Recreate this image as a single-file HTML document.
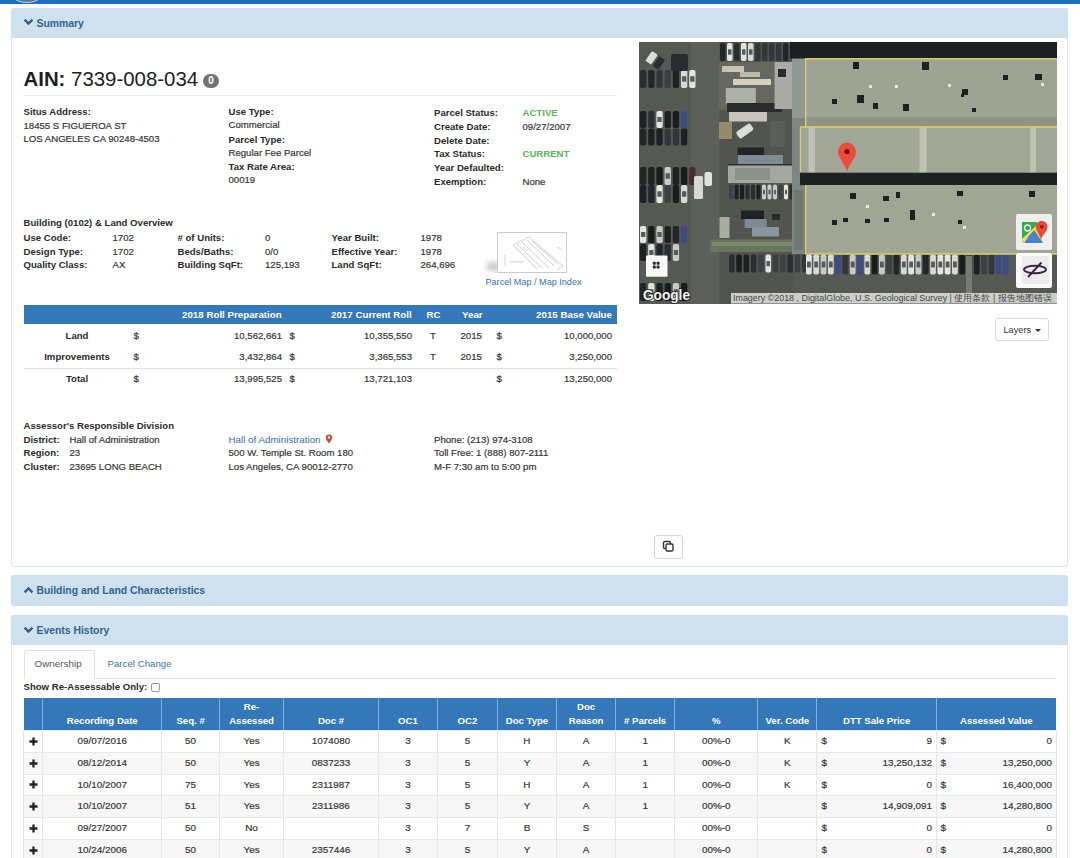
<!DOCTYPE html>
<html><head><meta charset="utf-8">
<style>
*{box-sizing:border-box}
html,body{margin:0;padding:0;background:#fff;width:1080px;height:858px;overflow:hidden}
body{position:relative;font-family:"Liberation Sans",sans-serif;color:#333}
.a{position:absolute}
.t{position:absolute;white-space:nowrap;line-height:12px;font-size:9.6px;color:#3a3a3a}
.b{font-weight:bold;color:#2b2b2b}
.g{color:#363636;-webkit-text-stroke:0.2px #363636}
.ph{position:absolute;left:11px;width:1057px;background:#d0e1ee;border-radius:3px 3px 0 0}
.ph span{position:absolute;left:25.5px;font-weight:bold;font-size:10.4px;color:#2f6491;line-height:14px;white-space:nowrap}
.chev{position:absolute;left:12px}
.th{position:absolute;background:#3478ba}
.wt{color:#fff;font-weight:bold}
.r{text-align:right}
.c{text-align:center}
</style></head><body>

<!-- top blue bar -->
<div class="a" style="left:0;top:0;width:1080px;height:4px;background:#1f6fbb"></div>
<div class="a" style="left:2px;top:-47.5px;width:50px;height:50px;border-radius:50%;border:1.5px solid #c9d3dc;background:#4f79a3"></div>

<!-- Summary panel -->
<div class="a" style="left:11px;top:8px;width:1057px;height:559px;border:1px solid #e3e6e9;border-radius:3px"></div>
<div class="ph" style="top:8px;height:30px"><svg class="chev" style="top:10px" width="11" height="8" viewBox="0 0 11 8"><polyline points="1.6,1.6 5.5,5.6 9.4,1.6" fill="none" stroke="#2d6190" stroke-width="2.4"/></svg><span style="top:9px">Summary</span></div>


<!-- AIN -->
<div class="a" style="left:23.5px;top:66.8px;font-size:20.4px;line-height:24px;color:#1e1e1e;white-space:nowrap"><b>AIN:</b> 7339-008-034</div>
<div class="a" style="left:203px;top:73.5px;width:16px;height:14px;border-radius:7px;background:#727272;color:#fff;font-size:10px;font-weight:bold;line-height:14px;text-align:center">0</div>
<div class="a" style="left:23px;top:95px;width:594px;height:1px;background:#ebebeb"></div>

<!-- col1 -->
<div class="t b" style="left:23.5px;top:106px">Situs Address:</div>
<div class="t g" style="left:23.5px;top:120px">18455 S FIGUEROA ST</div>
<div class="t g" style="left:23.5px;top:133px">LOS ANGELES CA 90248-4503</div>
<!-- col2 -->
<div class="t b" style="left:228.5px;top:106px">Use Type:</div>
<div class="t g" style="left:228.5px;top:119px">Commercial</div>
<div class="t b" style="left:228.5px;top:134px">Parcel Type:</div>
<div class="t g" style="left:228.5px;top:147px">Regular Fee Parcel</div>
<div class="t b" style="left:228.5px;top:161px">Tax Rate Area:</div>
<div class="t g" style="left:228.5px;top:174px">00019</div>
<!-- col3 -->
<div class="t b" style="left:434px;top:106.5px">Parcel Status:</div>
<div class="t b" style="left:434px;top:121px">Create Date:</div>
<div class="t b" style="left:434px;top:134.5px">Delete Date:</div>
<div class="t b" style="left:434px;top:148px">Tax Status:</div>
<div class="t b" style="left:434px;top:162px">Year Defaulted:</div>
<div class="t b" style="left:434px;top:175.5px">Exemption:</div>
<div class="t" style="left:522.5px;top:106.5px;color:#5cb85c;font-weight:bold">ACTIVE</div>
<div class="t g" style="left:522.5px;top:121px">09/27/2007</div>
<div class="t" style="left:522.5px;top:148px;color:#5cb85c;font-weight:bold">CURRENT</div>
<div class="t g" style="left:522.5px;top:175.5px">None</div>

<!-- building overview -->
<div class="t b" style="left:23.5px;top:217px">Building (0102) &amp; Land Overview</div>
<div class="t b" style="left:23.5px;top:231.5px">Use Code:</div>
<div class="t b" style="left:23.5px;top:245.5px">Design Type:</div>
<div class="t b" style="left:23.5px;top:258.5px">Quality Class:</div>
<div class="t g" style="left:112.5px;top:231.5px">1702</div>
<div class="t g" style="left:112.5px;top:245.5px">1702</div>
<div class="t g" style="left:112.5px;top:258.5px">AX</div>
<div class="t b" style="left:177.5px;top:231.5px"># of Units:</div>
<div class="t b" style="left:177.5px;top:245.5px">Beds/Baths:</div>
<div class="t b" style="left:177.5px;top:258.5px">Building SqFt:</div>
<div class="t g" style="left:265px;top:231.5px">0</div>
<div class="t g" style="left:265px;top:245.5px">0/0</div>
<div class="t g" style="left:265px;top:258.5px">125,193</div>
<div class="t b" style="left:331.5px;top:231.5px">Year Built:</div>
<div class="t b" style="left:331.5px;top:245.5px">Effective Year:</div>
<div class="t b" style="left:331.5px;top:258.5px">Land SqFt:</div>
<div class="t g" style="left:420.5px;top:231.5px">1978</div>
<div class="t g" style="left:420.5px;top:245.5px">1978</div>
<div class="t g" style="left:420.5px;top:258.5px">264,696</div>


<!-- parcel map thumb -->
<div class="a" style="left:486px;top:262px;width:16px;height:9px;background:#cfcfcf;border-radius:5px;filter:blur(2.5px)"></div>
<div class="a" style="left:497px;top:231.5px;width:70px;height:41px;border:1.5px solid #cbcbcb;background:#fff"></div>
<svg class="a" style="left:498.5px;top:233px" width="67" height="38" viewBox="0 0 67 38">
<g stroke="#bdbdbd" stroke-width="0.7" fill="none">
<polyline points="14,12 30,4 64,33 58,37"/>
<line x1="14" y1="12" x2="38" y2="36"/>
<line x1="18" y1="11" x2="43" y2="35"/>
<line x1="23" y1="9" x2="50" y2="35"/>
<line x1="28" y1="7" x2="55" y2="33"/>
<line x1="33" y1="8" x2="59" y2="31"/>
<line x1="24" y1="14" x2="28" y2="18"/>
<line x1="6" y1="22" x2="6" y2="33"/>
<line x1="11" y1="29" x2="24" y2="29"/>
<line x1="58" y1="14" x2="62" y2="16"/>
</g></svg>
<div class="t" style="left:485.5px;top:276px;color:#3a70a8;font-size:9.1px">Parcel Map / Map Index</div>

<!-- values table -->
<div class="th" style="left:23.5px;top:304.5px;width:593px;height:19px"></div>
<div class="t wt" style="left:182px;top:308.5px;font-size:9.75px">2018 Roll Preparation</div>
<div class="t wt" style="left:331px;top:308.5px;font-size:9.75px">2017 Current Roll</div>
<div class="t wt" style="left:426.5px;top:308.5px;font-size:9.75px">RC</div>
<div class="t wt" style="left:462px;top:308.5px;font-size:9.75px">Year</div>
<div class="t wt r" style="left:450px;width:162px;top:308.5px;font-size:9.75px">2015 Base Value</div>

<div class="t b c" style="left:37px;width:80px;top:329.5px">Land</div>
<div class="t b c" style="left:37px;width:80px;top:350.5px">Improvements</div>
<div class="t b c" style="left:37px;width:80px;top:373px">Total</div>
<div class="a" style="left:23.5px;top:367.5px;width:593px;height:1px;background:#e2e2e2"></div>

<div class="t g" style="left:133.5px;top:329.5px">$</div>
<div class="t g" style="left:133.5px;top:350.5px">$</div>
<div class="t g" style="left:133.5px;top:373px">$</div>
<div class="t g r" style="left:182px;width:100px;top:329.5px">10,562,661</div>
<div class="t g r" style="left:182px;width:100px;top:350.5px">3,432,864</div>
<div class="t g r" style="left:182px;width:100px;top:373px">13,995,525</div>
<div class="t g" style="left:289.5px;top:329.5px">$</div>
<div class="t g" style="left:289.5px;top:350.5px">$</div>
<div class="t g" style="left:289.5px;top:373px">$</div>
<div class="t g r" style="left:312px;width:100px;top:329.5px">10,355,550</div>
<div class="t g r" style="left:312px;width:100px;top:350.5px">3,365,553</div>
<div class="t g r" style="left:312px;width:100px;top:373px">13,721,103</div>
<div class="t g c" style="left:423px;width:20px;top:329.5px">T</div>
<div class="t g c" style="left:423px;width:20px;top:350.5px">T</div>
<div class="t g" style="left:460.5px;top:329.5px">2015</div>
<div class="t g" style="left:460.5px;top:350.5px">2015</div>
<div class="t g" style="left:496.5px;top:329.5px">$</div>
<div class="t g" style="left:496.5px;top:350.5px">$</div>
<div class="t g" style="left:496.5px;top:373px">$</div>
<div class="t g r" style="left:512px;width:100px;top:329.5px">10,000,000</div>
<div class="t g r" style="left:512px;width:100px;top:350.5px">3,250,000</div>
<div class="t g r" style="left:512px;width:100px;top:373px">13,250,000</div>

<!-- assessor division -->
<div class="t b" style="left:23.5px;top:420px">Assessor's Responsible Division</div>
<div class="t b" style="left:23.5px;top:433.5px">District:</div>
<div class="t b" style="left:23.5px;top:447px">Region:</div>
<div class="t b" style="left:23.5px;top:461px">Cluster:</div>
<div class="t g" style="left:69.5px;top:433.5px">Hall of Administration</div>
<div class="t g" style="left:69.5px;top:447px">23</div>
<div class="t g" style="left:69.5px;top:461px">23695 LONG BEACH</div>
<div class="t" style="left:228.5px;top:433.5px;color:#3a6fa6;font-size:9.8px">Hall of Administration</div>
<svg class="a" style="left:325px;top:434px" width="8" height="10" viewBox="0 0 8 10"><path d="M4 0.5C2.1 0.5 0.8 1.8 0.8 3.5C0.8 5.6 4 9.5 4 9.5C4 9.5 7.2 5.6 7.2 3.5C7.2 1.8 5.9 0.5 4 0.5Z" fill="#c9452e"/><circle cx="4" cy="3.5" r="1.2" fill="#fff"/></svg>
<div class="t g" style="left:228.5px;top:447px">500 W. Temple St. Room 180</div>
<div class="t g" style="left:228.5px;top:461px">Los Angeles, CA 90012-2770</div>
<div class="t g" style="left:434px;top:433.5px">Phone: (213) 974-3108</div>
<div class="t g" style="left:434px;top:447px">Toll Free: 1 (888) 807-2111</div>
<div class="t g" style="left:434px;top:461px">M-F 7:30 am to 5:00 pm</div>

<!-- copy button -->
<div class="a" style="left:654px;top:534.5px;width:29px;height:24px;border:1px solid #d6d6d6;border-radius:3px;background:#fff"></div>
<svg class="a" style="left:662px;top:540px" width="13" height="13" viewBox="0 0 13 13"><rect x="1.5" y="1.5" width="7" height="7" rx="1.3" fill="none" stroke="#333" stroke-width="1.4"/><rect x="4" y="4" width="7" height="7" rx="1.3" fill="#fff" stroke="#333" stroke-width="1.4"/></svg>

<!-- layers button -->
<div class="a" style="left:995px;top:318px;width:54px;height:23px;border:1px solid #d9d9d9;border-radius:3px;background:#fff"></div>
<div class="t" style="left:1003.5px;top:323.5px;color:#333;font-size:9.2px">Layers</div>
<div class="a" style="left:1035px;top:328.5px;width:0;height:0;border-left:3px solid transparent;border-right:3px solid transparent;border-top:3px solid #333"></div>

<!-- Building panel heading -->
<div class="ph" style="top:575px;height:31px;border-radius:3px"><svg class="chev" style="top:11px" width="11" height="8" viewBox="0 0 11 8"><polyline points="1.6,6.4 5.5,2.4 9.4,6.4" fill="none" stroke="#2d6190" stroke-width="2.4"/></svg><span style="top:9px">Building and Land Characteristics</span></div>

<!-- Events panel -->
<div class="a" style="left:11px;top:615px;width:1057px;height:260px;border:1px solid #e3e6e9;border-radius:3px"></div>
<div class="ph" style="top:615px;height:30px"><svg class="chev" style="top:11px" width="11" height="8" viewBox="0 0 11 8"><polyline points="1.6,1.6 5.5,5.6 9.4,1.6" fill="none" stroke="#2d6190" stroke-width="2.4"/></svg><span style="top:9px">Events History</span></div>

<!-- tabs -->
<div class="a" style="left:94px;top:677.5px;width:962px;height:1px;background:#e0e0e0"></div>
<div class="a" style="left:23.5px;top:649.5px;width:71px;height:29px;border:1px solid #e0e0e0;border-bottom:none;border-radius:3px 3px 0 0;background:#fff"></div>
<div class="t" style="left:34.5px;top:658px;color:#555;font-size:9.9px">Ownership</div>
<div class="t" style="left:107.5px;top:658px;color:#3b75ad;font-size:9.7px">Parcel Change</div>
<div class="t b" style="left:23.5px;top:680.5px">Show Re-Assessable Only:</div>
<div class="a" style="left:151px;top:683px;width:8.5px;height:8.5px;border:1px solid #999;border-radius:2px;background:#fff"></div>
<div class="th" style="left:23.8px;top:697.5px;width:1032.6000000000001px;height:32.5px"></div>
<div class="a" style="left:42.4px;top:697.5px;width:1px;height:32.5px;background:#7db2e5"></div>
<div class="a" style="left:161.1px;top:697.5px;width:1px;height:32.5px;background:#7db2e5"></div>
<div class="a" style="left:219.1px;top:697.5px;width:1px;height:32.5px;background:#7db2e5"></div>
<div class="a" style="left:283.0px;top:697.5px;width:1px;height:32.5px;background:#7db2e5"></div>
<div class="a" style="left:377.9px;top:697.5px;width:1px;height:32.5px;background:#7db2e5"></div>
<div class="a" style="left:437.0px;top:697.5px;width:1px;height:32.5px;background:#7db2e5"></div>
<div class="a" style="left:496.9px;top:697.5px;width:1px;height:32.5px;background:#7db2e5"></div>
<div class="a" style="left:556.0px;top:697.5px;width:1px;height:32.5px;background:#7db2e5"></div>
<div class="a" style="left:615.1px;top:697.5px;width:1px;height:32.5px;background:#7db2e5"></div>
<div class="a" style="left:674.2px;top:697.5px;width:1px;height:32.5px;background:#7db2e5"></div>
<div class="a" style="left:757.3px;top:697.5px;width:1px;height:32.5px;background:#7db2e5"></div>
<div class="a" style="left:816.4px;top:697.5px;width:1px;height:32.5px;background:#7db2e5"></div>
<div class="a" style="left:935.9px;top:697.5px;width:1px;height:32.5px;background:#7db2e5"></div>
<div class="a" style="left:23.8px;top:730px;width:1032.6000000000001px;height:21.799999999999955px;background:#fff;border-top:1px solid #e9e9e9"></div>
<div class="a" style="left:23.8px;top:751.8px;width:1032.6000000000001px;height:21.800000000000068px;background:#f7f7f7;border-top:1px solid #e9e9e9"></div>
<div class="a" style="left:23.8px;top:773.6px;width:1032.6000000000001px;height:21.799999999999955px;background:#fff;border-top:1px solid #e9e9e9"></div>
<div class="a" style="left:23.8px;top:795.4px;width:1032.6000000000001px;height:21.800000000000068px;background:#f7f7f7;border-top:1px solid #e9e9e9"></div>
<div class="a" style="left:23.8px;top:817.2px;width:1032.6000000000001px;height:21.799999999999955px;background:#fff;border-top:1px solid #e9e9e9"></div>
<div class="a" style="left:23.8px;top:839px;width:1032.6000000000001px;height:21.799999999999955px;background:#f7f7f7;border-top:1px solid #e9e9e9"></div>
<div class="a" style="left:23.3px;top:730px;width:1px;height:130px;background:#e6e6e6"></div>
<div class="a" style="left:42.4px;top:730px;width:1px;height:130px;background:#e6e6e6"></div>
<div class="a" style="left:161.1px;top:730px;width:1px;height:130px;background:#e6e6e6"></div>
<div class="a" style="left:219.1px;top:730px;width:1px;height:130px;background:#e6e6e6"></div>
<div class="a" style="left:283.0px;top:730px;width:1px;height:130px;background:#e6e6e6"></div>
<div class="a" style="left:377.9px;top:730px;width:1px;height:130px;background:#e6e6e6"></div>
<div class="a" style="left:437.0px;top:730px;width:1px;height:130px;background:#e6e6e6"></div>
<div class="a" style="left:496.9px;top:730px;width:1px;height:130px;background:#e6e6e6"></div>
<div class="a" style="left:556.0px;top:730px;width:1px;height:130px;background:#e6e6e6"></div>
<div class="a" style="left:615.1px;top:730px;width:1px;height:130px;background:#e6e6e6"></div>
<div class="a" style="left:674.2px;top:730px;width:1px;height:130px;background:#e6e6e6"></div>
<div class="a" style="left:757.3px;top:730px;width:1px;height:130px;background:#e6e6e6"></div>
<div class="a" style="left:816.4px;top:730px;width:1px;height:130px;background:#e6e6e6"></div>
<div class="a" style="left:935.9px;top:730px;width:1px;height:130px;background:#e6e6e6"></div>
<div class="a" style="left:1055.9px;top:730px;width:1px;height:130px;background:#e6e6e6"></div>
<div class="t wt c" style="left:42.9px;width:118.69999999999999px;top:714.5px">Recording Date</div>
<div class="t wt c" style="left:161.6px;width:58.0px;top:714.5px">Seq. #</div>
<div class="t wt c" style="left:219.6px;width:63.900000000000006px;top:701px">Re-</div>
<div class="t wt c" style="left:219.6px;width:63.900000000000006px;top:714.5px">Assessed</div>
<div class="t wt c" style="left:283.5px;width:94.89999999999998px;top:714.5px">Doc #</div>
<div class="t wt c" style="left:378.4px;width:59.10000000000002px;top:714.5px">OC1</div>
<div class="t wt c" style="left:437.5px;width:59.89999999999998px;top:714.5px">OC2</div>
<div class="t wt c" style="left:497.4px;width:59.10000000000002px;top:714.5px">Doc Type</div>
<div class="t wt c" style="left:556.5px;width:59.10000000000002px;top:701px">Doc</div>
<div class="t wt c" style="left:556.5px;width:59.10000000000002px;top:714.5px">Reason</div>
<div class="t wt c" style="left:615.6px;width:59.10000000000002px;top:714.5px"># Parcels</div>
<div class="t wt c" style="left:674.7px;width:83.09999999999991px;top:714.5px">%</div>
<div class="t wt c" style="left:757.8px;width:59.10000000000002px;top:714.5px">Ver. Code</div>
<div class="t wt c" style="left:816.9px;width:119.5px;top:714.5px">DTT Sale Price</div>
<div class="t wt c" style="left:936.4px;width:120.00000000000011px;top:714.5px">Assessed Value</div>
<svg class="a" style="left:28.5px;top:736.5px" width="9" height="9" viewBox="0 0 9 9"><path d="M4.5 0.5V8.5M0.5 4.5H8.5" stroke="#222" stroke-width="2.3"/></svg>
<div class="t g c" style="left:42.9px;width:118.69999999999999px;top:735px;font-size:9.9px">09/07/2016</div>
<div class="t g c" style="left:161.6px;width:58.0px;top:735px;font-size:9.9px">50</div>
<div class="t g c" style="left:219.6px;width:63.900000000000006px;top:735px;font-size:9.9px">Yes</div>
<div class="t g c" style="left:283.5px;width:94.89999999999998px;top:735px;font-size:9.9px">1074080</div>
<div class="t g c" style="left:378.4px;width:59.10000000000002px;top:735px;font-size:9.9px">3</div>
<div class="t g c" style="left:437.5px;width:59.89999999999998px;top:735px;font-size:9.9px">5</div>
<div class="t g c" style="left:497.4px;width:59.10000000000002px;top:735px;font-size:9.9px">H</div>
<div class="t g c" style="left:556.5px;width:59.10000000000002px;top:735px;font-size:9.9px">A</div>
<div class="t g c" style="left:615.6px;width:59.10000000000002px;top:735px;font-size:9.9px">1</div>
<div class="t g c" style="left:674.7px;width:83.09999999999991px;top:735px;font-size:9.9px">00%-0</div>
<div class="t g c" style="left:757.8px;width:59.10000000000002px;top:735px;font-size:9.9px">K</div>
<div class="t g" style="left:821.5px;top:735px;font-size:9.9px">$</div>
<div class="t g r" style="left:832px;width:100px;top:735px;font-size:9.9px">9</div>
<div class="t g" style="left:940.5px;top:735px;font-size:9.9px">$</div>
<div class="t g r" style="left:952px;width:100px;top:735px;font-size:9.9px">0</div>
<svg class="a" style="left:28.5px;top:758.5px" width="9" height="9" viewBox="0 0 9 9"><path d="M4.5 0.5V8.5M0.5 4.5H8.5" stroke="#222" stroke-width="2.3"/></svg>
<div class="t g c" style="left:42.9px;width:118.69999999999999px;top:757px;font-size:9.9px">08/12/2014</div>
<div class="t g c" style="left:161.6px;width:58.0px;top:757px;font-size:9.9px">50</div>
<div class="t g c" style="left:219.6px;width:63.900000000000006px;top:757px;font-size:9.9px">Yes</div>
<div class="t g c" style="left:283.5px;width:94.89999999999998px;top:757px;font-size:9.9px">0837233</div>
<div class="t g c" style="left:378.4px;width:59.10000000000002px;top:757px;font-size:9.9px">3</div>
<div class="t g c" style="left:437.5px;width:59.89999999999998px;top:757px;font-size:9.9px">5</div>
<div class="t g c" style="left:497.4px;width:59.10000000000002px;top:757px;font-size:9.9px">Y</div>
<div class="t g c" style="left:556.5px;width:59.10000000000002px;top:757px;font-size:9.9px">A</div>
<div class="t g c" style="left:615.6px;width:59.10000000000002px;top:757px;font-size:9.9px">1</div>
<div class="t g c" style="left:674.7px;width:83.09999999999991px;top:757px;font-size:9.9px">00%-0</div>
<div class="t g c" style="left:757.8px;width:59.10000000000002px;top:757px;font-size:9.9px">K</div>
<div class="t g" style="left:821.5px;top:757px;font-size:9.9px">$</div>
<div class="t g r" style="left:832px;width:100px;top:757px;font-size:9.9px">13,250,132</div>
<div class="t g" style="left:940.5px;top:757px;font-size:9.9px">$</div>
<div class="t g r" style="left:952px;width:100px;top:757px;font-size:9.9px">13,250,000</div>
<svg class="a" style="left:28.5px;top:780.2px" width="9" height="9" viewBox="0 0 9 9"><path d="M4.5 0.5V8.5M0.5 4.5H8.5" stroke="#222" stroke-width="2.3"/></svg>
<div class="t g c" style="left:42.9px;width:118.69999999999999px;top:778.7px;font-size:9.9px">10/10/2007</div>
<div class="t g c" style="left:161.6px;width:58.0px;top:778.7px;font-size:9.9px">75</div>
<div class="t g c" style="left:219.6px;width:63.900000000000006px;top:778.7px;font-size:9.9px">Yes</div>
<div class="t g c" style="left:283.5px;width:94.89999999999998px;top:778.7px;font-size:9.9px">2311987</div>
<div class="t g c" style="left:378.4px;width:59.10000000000002px;top:778.7px;font-size:9.9px">3</div>
<div class="t g c" style="left:437.5px;width:59.89999999999998px;top:778.7px;font-size:9.9px">5</div>
<div class="t g c" style="left:497.4px;width:59.10000000000002px;top:778.7px;font-size:9.9px">H</div>
<div class="t g c" style="left:556.5px;width:59.10000000000002px;top:778.7px;font-size:9.9px">A</div>
<div class="t g c" style="left:615.6px;width:59.10000000000002px;top:778.7px;font-size:9.9px">1</div>
<div class="t g c" style="left:674.7px;width:83.09999999999991px;top:778.7px;font-size:9.9px">00%-0</div>
<div class="t g c" style="left:757.8px;width:59.10000000000002px;top:778.7px;font-size:9.9px">K</div>
<div class="t g" style="left:821.5px;top:778.7px;font-size:9.9px">$</div>
<div class="t g r" style="left:832px;width:100px;top:778.7px;font-size:9.9px">0</div>
<div class="t g" style="left:940.5px;top:778.7px;font-size:9.9px">$</div>
<div class="t g r" style="left:952px;width:100px;top:778.7px;font-size:9.9px">16,400,000</div>
<svg class="a" style="left:28.5px;top:801.8px" width="9" height="9" viewBox="0 0 9 9"><path d="M4.5 0.5V8.5M0.5 4.5H8.5" stroke="#222" stroke-width="2.3"/></svg>
<div class="t g c" style="left:42.9px;width:118.69999999999999px;top:800.3px;font-size:9.9px">10/10/2007</div>
<div class="t g c" style="left:161.6px;width:58.0px;top:800.3px;font-size:9.9px">51</div>
<div class="t g c" style="left:219.6px;width:63.900000000000006px;top:800.3px;font-size:9.9px">Yes</div>
<div class="t g c" style="left:283.5px;width:94.89999999999998px;top:800.3px;font-size:9.9px">2311986</div>
<div class="t g c" style="left:378.4px;width:59.10000000000002px;top:800.3px;font-size:9.9px">3</div>
<div class="t g c" style="left:437.5px;width:59.89999999999998px;top:800.3px;font-size:9.9px">5</div>
<div class="t g c" style="left:497.4px;width:59.10000000000002px;top:800.3px;font-size:9.9px">Y</div>
<div class="t g c" style="left:556.5px;width:59.10000000000002px;top:800.3px;font-size:9.9px">A</div>
<div class="t g c" style="left:615.6px;width:59.10000000000002px;top:800.3px;font-size:9.9px">1</div>
<div class="t g c" style="left:674.7px;width:83.09999999999991px;top:800.3px;font-size:9.9px">00%-0</div>
<div class="t g" style="left:821.5px;top:800.3px;font-size:9.9px">$</div>
<div class="t g r" style="left:832px;width:100px;top:800.3px;font-size:9.9px">14,909,091</div>
<div class="t g" style="left:940.5px;top:800.3px;font-size:9.9px">$</div>
<div class="t g r" style="left:952px;width:100px;top:800.3px;font-size:9.9px">14,280,800</div>
<svg class="a" style="left:28.5px;top:823.8px" width="9" height="9" viewBox="0 0 9 9"><path d="M4.5 0.5V8.5M0.5 4.5H8.5" stroke="#222" stroke-width="2.3"/></svg>
<div class="t g c" style="left:42.9px;width:118.69999999999999px;top:822.3px;font-size:9.9px">09/27/2007</div>
<div class="t g c" style="left:161.6px;width:58.0px;top:822.3px;font-size:9.9px">50</div>
<div class="t g c" style="left:219.6px;width:63.900000000000006px;top:822.3px;font-size:9.9px">No</div>
<div class="t g c" style="left:378.4px;width:59.10000000000002px;top:822.3px;font-size:9.9px">3</div>
<div class="t g c" style="left:437.5px;width:59.89999999999998px;top:822.3px;font-size:9.9px">7</div>
<div class="t g c" style="left:497.4px;width:59.10000000000002px;top:822.3px;font-size:9.9px">B</div>
<div class="t g c" style="left:556.5px;width:59.10000000000002px;top:822.3px;font-size:9.9px">S</div>
<div class="t g c" style="left:674.7px;width:83.09999999999991px;top:822.3px;font-size:9.9px">00%-0</div>
<div class="t g" style="left:821.5px;top:822.3px;font-size:9.9px">$</div>
<div class="t g r" style="left:832px;width:100px;top:822.3px;font-size:9.9px">0</div>
<div class="t g" style="left:940.5px;top:822.3px;font-size:9.9px">$</div>
<div class="t g r" style="left:952px;width:100px;top:822.3px;font-size:9.9px">0</div>
<svg class="a" style="left:28.5px;top:845.5px" width="9" height="9" viewBox="0 0 9 9"><path d="M4.5 0.5V8.5M0.5 4.5H8.5" stroke="#222" stroke-width="2.3"/></svg>
<div class="t g c" style="left:42.9px;width:118.69999999999999px;top:844px;font-size:9.9px">10/24/2006</div>
<div class="t g c" style="left:161.6px;width:58.0px;top:844px;font-size:9.9px">50</div>
<div class="t g c" style="left:219.6px;width:63.900000000000006px;top:844px;font-size:9.9px">Yes</div>
<div class="t g c" style="left:283.5px;width:94.89999999999998px;top:844px;font-size:9.9px">2357446</div>
<div class="t g c" style="left:378.4px;width:59.10000000000002px;top:844px;font-size:9.9px">3</div>
<div class="t g c" style="left:437.5px;width:59.89999999999998px;top:844px;font-size:9.9px">5</div>
<div class="t g c" style="left:497.4px;width:59.10000000000002px;top:844px;font-size:9.9px">Y</div>
<div class="t g c" style="left:556.5px;width:59.10000000000002px;top:844px;font-size:9.9px">A</div>
<div class="t g c" style="left:674.7px;width:83.09999999999991px;top:844px;font-size:9.9px">00%-0</div>
<div class="t g" style="left:821.5px;top:844px;font-size:9.9px">$</div>
<div class="t g r" style="left:832px;width:100px;top:844px;font-size:9.9px">0</div>
<div class="t g" style="left:940.5px;top:844px;font-size:9.9px">$</div>
<div class="t g r" style="left:952px;width:100px;top:844px;font-size:9.9px">14,280,800</div>
<!-- MAP -->
<svg class="a" style="left:639px;top:42px" width="418" height="261.5" viewBox="0 0 418 261.5"><rect x="0.0" y="0.0" width="418.0" height="262.0" fill="#565953" /><rect x="52.0" y="0.0" width="28.0" height="262.0" fill="#5d605a" /><rect x="1.0" y="28.0" width="6.3" height="18.0" fill="#2b2e30" rx="1.8"/><rect x="9.2" y="28.0" width="6.3" height="18.0" fill="#232628" rx="1.8"/><rect x="17.4" y="28.0" width="6.3" height="18.0" fill="#34373a" rx="1.8"/><rect x="25.6" y="28.0" width="6.3" height="18.0" fill="#3d4042" rx="1.8"/><rect x="33.8" y="28.0" width="6.3" height="18.0" fill="#1e2122" rx="1.8"/><rect x="42.0" y="28.0" width="6.3" height="18.0" fill="#d9d9d5" rx="1.8"/><rect x="43.0" y="34.3" width="4.3" height="5.4" fill="#555a5c" rx="0.5"/><rect x="50.2" y="28.0" width="6.3" height="18.0" fill="#e4e4e0" rx="1.8"/><rect x="51.2" y="34.3" width="4.3" height="5.4" fill="#555a5c" rx="0.5"/><rect x="1.0" y="69.0" width="6.3" height="17.0" fill="#1e2122" rx="1.8"/><rect x="9.2" y="69.0" width="6.3" height="17.0" fill="#2b2e30" rx="1.8"/><rect x="17.4" y="69.0" width="6.3" height="17.0" fill="#e4e4e0" rx="1.8"/><rect x="18.4" y="75.0" width="4.3" height="5.1" fill="#555a5c" rx="0.5"/><rect x="25.6" y="69.0" width="6.3" height="17.0" fill="#1e2122" rx="1.8"/><rect x="33.8" y="69.0" width="6.3" height="17.0" fill="#1a1c1d" rx="1.8"/><rect x="42.0" y="69.0" width="6.3" height="17.0" fill="#3b4c86" rx="1.8"/><rect x="1.0" y="86.5" width="6.3" height="17.0" fill="#232628" rx="1.8"/><rect x="9.2" y="86.5" width="6.3" height="17.0" fill="#1e2122" rx="1.8"/><rect x="17.4" y="86.5" width="6.3" height="17.0" fill="#1e2122" rx="1.8"/><rect x="25.6" y="86.5" width="6.3" height="17.0" fill="#34373a" rx="1.8"/><rect x="33.8" y="86.5" width="6.3" height="17.0" fill="#34373a" rx="1.8"/><rect x="42.0" y="86.5" width="6.3" height="17.0" fill="#1e2122" rx="1.8"/><rect x="1.0" y="125.0" width="6.3" height="18.0" fill="#232628" rx="1.8"/><rect x="9.2" y="125.0" width="6.3" height="18.0" fill="#1e2122" rx="1.8"/><rect x="17.4" y="125.0" width="6.3" height="18.0" fill="#1a1c1d" rx="1.8"/><rect x="25.6" y="125.0" width="6.3" height="18.0" fill="#c9cac6" rx="1.8"/><rect x="26.6" y="131.3" width="4.3" height="5.4" fill="#555a5c" rx="0.5"/><rect x="33.8" y="125.0" width="6.3" height="18.0" fill="#1e2122" rx="1.8"/><rect x="42.0" y="125.0" width="6.3" height="18.0" fill="#1a1c1d" rx="1.8"/><rect x="50.2" y="125.0" width="6.3" height="18.0" fill="#4a2a30" rx="1.8"/><rect x="1.0" y="143.0" width="6.3" height="18.0" fill="#1e2122" rx="1.8"/><rect x="9.2" y="143.0" width="6.3" height="18.0" fill="#232628" rx="1.8"/><rect x="17.4" y="143.0" width="6.3" height="18.0" fill="#e4e4e0" rx="1.8"/><rect x="18.4" y="149.3" width="4.3" height="5.4" fill="#555a5c" rx="0.5"/><rect x="25.6" y="143.0" width="6.3" height="18.0" fill="#3d4042" rx="1.8"/><rect x="33.8" y="143.0" width="6.3" height="18.0" fill="#1a1c1d" rx="1.8"/><rect x="42.0" y="143.0" width="6.3" height="18.0" fill="#d9d9d5" rx="1.8"/><rect x="43.0" y="149.3" width="4.3" height="5.4" fill="#555a5c" rx="0.5"/><rect x="1.0" y="184.0" width="6.3" height="17.0" fill="#e4e4e0" rx="1.8"/><rect x="2.0" y="189.9" width="4.3" height="5.1" fill="#555a5c" rx="0.5"/><rect x="9.2" y="184.0" width="6.3" height="17.0" fill="#1a1c1d" rx="1.8"/><rect x="17.4" y="184.0" width="6.3" height="17.0" fill="#c9cac6" rx="1.8"/><rect x="18.4" y="189.9" width="4.3" height="5.1" fill="#555a5c" rx="0.5"/><rect x="25.6" y="184.0" width="6.3" height="17.0" fill="#1e2122" rx="1.8"/><rect x="33.8" y="184.0" width="6.3" height="17.0" fill="#232628" rx="1.8"/><rect x="42.0" y="184.0" width="6.3" height="17.0" fill="#3b4c86" rx="1.8"/><rect x="1.0" y="202.0" width="6.3" height="17.0" fill="#1e2122" rx="1.8"/><rect x="9.2" y="202.0" width="6.3" height="17.0" fill="#e4e4e0" rx="1.8"/><rect x="10.2" y="207.9" width="4.3" height="5.1" fill="#555a5c" rx="0.5"/><rect x="17.4" y="202.0" width="6.3" height="17.0" fill="#232628" rx="1.8"/><rect x="25.6" y="202.0" width="6.3" height="17.0" fill="#2b2e30" rx="1.8"/><rect x="33.8" y="202.0" width="6.3" height="17.0" fill="#c9cac6" rx="1.8"/><rect x="34.8" y="207.9" width="4.3" height="5.1" fill="#555a5c" rx="0.5"/><rect x="1.0" y="241.0" width="6.3" height="18.0" fill="#232628" rx="1.8"/><rect x="9.2" y="241.0" width="6.3" height="18.0" fill="#e4e4e0" rx="1.8"/><rect x="10.2" y="247.3" width="4.3" height="5.4" fill="#555a5c" rx="0.5"/><rect x="17.4" y="241.0" width="6.3" height="18.0" fill="#1e2122" rx="1.8"/><rect x="25.6" y="241.0" width="6.3" height="18.0" fill="#1a1c1d" rx="1.8"/><rect x="33.8" y="241.0" width="6.3" height="18.0" fill="#c9cac6" rx="1.8"/><rect x="34.8" y="247.3" width="4.3" height="5.4" fill="#555a5c" rx="0.5"/><rect x="42.0" y="241.0" width="6.3" height="18.0" fill="#1a1c1d" rx="1.8"/><g transform="rotate(35 16 17)"><rect x="9.0" y="12.0" width="7.0" height="12.0" fill="#dcdcd8" rx="1.5"/><rect x="18.0" y="12.0" width="7.0" height="12.0" fill="#2a2c2d" rx="1.5"/></g><rect x="32.0" y="12.0" width="17.0" height="17.0" fill="#2a2b2e" rx="2"/><rect x="55.0" y="134.0" width="9.0" height="23.0" fill="#d8d8d2" rx="1.5"/><rect x="65.5" y="130.0" width="7.5" height="14.0" fill="#e0e0dc" rx="2"/><rect x="80.5" y="0.0" width="74.0" height="262.0" fill="#52554f" /><rect x="81.0" y="1.0" width="5.5" height="18.0" fill="#232628" rx="1.8"/><rect x="88.0" y="1.0" width="5.5" height="18.0" fill="#e4e4e0" rx="1.8"/><rect x="89.0" y="7.3" width="3.5" height="5.4" fill="#555a5c" rx="0.5"/><rect x="95.0" y="1.0" width="5.5" height="18.0" fill="#2b2e30" rx="1.8"/><rect x="102.0" y="1.0" width="5.5" height="18.0" fill="#e4e4e0" rx="1.8"/><rect x="103.0" y="7.3" width="3.5" height="5.4" fill="#555a5c" rx="0.5"/><rect x="109.0" y="1.0" width="5.5" height="18.0" fill="#d9d9d5" rx="1.8"/><rect x="110.0" y="7.3" width="3.5" height="5.4" fill="#555a5c" rx="0.5"/><rect x="116.0" y="1.0" width="5.5" height="18.0" fill="#34373a" rx="1.8"/><rect x="123.0" y="1.0" width="5.5" height="18.0" fill="#34373a" rx="1.8"/><rect x="130.0" y="1.0" width="5.5" height="18.0" fill="#34373a" rx="1.8"/><rect x="137.0" y="1.0" width="5.5" height="18.0" fill="#34373a" rx="1.8"/><rect x="144.0" y="1.0" width="5.5" height="18.0" fill="#232628" rx="1.8"/><rect x="80.0" y="20.0" width="60.0" height="48.0" fill="#66675f" /><rect x="83.0" y="24.0" width="22.0" height="6.0" fill="#c9c4b8" /><rect x="94.0" y="37.0" width="38.0" height="6.0" fill="#d6d0c4" /><rect x="101.0" y="30.0" width="20.0" height="5.0" fill="#bdb8aa" /><rect x="86.8" y="46.0" width="30.0" height="16.0" fill="#aeb1a8" /><rect x="88.0" y="61.0" width="55.0" height="9.0" fill="#2a2b2a" /><rect x="90.0" y="70.0" width="38.0" height="9.5" fill="#c6c6bc" /><rect x="135.6" y="20.0" width="19.0" height="47.0" fill="#a9aca6" /><rect x="139.0" y="27.0" width="8.0" height="8.0" fill="#2a2c2c" /><rect x="80.0" y="80.0" width="13.0" height="17.0" fill="#968a6c" /><g transform="rotate(-35 106 90)"><rect x="98.0" y="85.0" width="17.0" height="8.0" fill="#dcdcd8" rx="2"/></g><rect x="131.0" y="79.0" width="15.0" height="26.0" fill="#5b5e58" /><rect x="98.6" y="105.5" width="26.5" height="8.0" fill="#232524" /><rect x="99.0" y="113.0" width="45.0" height="9.0" fill="#7f8a92" /><rect x="89.0" y="123.0" width="65.5" height="18.0" fill="#a3a8a0" /><rect x="96.0" y="126.0" width="35.0" height="12.0" fill="#8b918c" /><rect x="89.0" y="122.0" width="65.5" height="1.5" fill="#2e302e" /><rect x="90.0" y="142.5" width="4.0" height="15.0" fill="#3d4042" rx="1.8"/><rect x="95.5" y="142.5" width="4.0" height="15.0" fill="#1e2122" rx="1.8"/><rect x="101.0" y="142.5" width="4.0" height="15.0" fill="#1a1c1d" rx="1.8"/><rect x="106.5" y="142.5" width="4.0" height="15.0" fill="#2b2e30" rx="1.8"/><rect x="112.0" y="142.5" width="4.0" height="15.0" fill="#2b2e30" rx="1.8"/><rect x="117.5" y="142.5" width="4.0" height="15.0" fill="#1e2122" rx="1.8"/><rect x="123.0" y="142.5" width="4.0" height="15.0" fill="#c9cac6" rx="1.8"/><rect x="124.0" y="147.8" width="2.0" height="4.5" fill="#555a5c" rx="0.5"/><rect x="128.5" y="142.5" width="4.0" height="15.0" fill="#c9cac6" rx="1.8"/><rect x="129.5" y="147.8" width="2.0" height="4.5" fill="#555a5c" rx="0.5"/><rect x="134.0" y="142.5" width="4.0" height="15.0" fill="#c9cac6" rx="1.8"/><rect x="135.0" y="147.8" width="2.0" height="4.5" fill="#555a5c" rx="0.5"/><rect x="139.5" y="142.5" width="4.0" height="15.0" fill="#3d4042" rx="1.8"/><rect x="145.0" y="142.5" width="4.0" height="15.0" fill="#e4e4e0" rx="1.8"/><rect x="146.0" y="147.8" width="2.0" height="4.5" fill="#555a5c" rx="0.5"/><rect x="150.5" y="142.5" width="4.0" height="15.0" fill="#2b2e30" rx="1.8"/><rect x="102.0" y="168.5" width="23.0" height="8.5" fill="#1f2122" /><rect x="105.7" y="177.0" width="22.0" height="9.0" fill="#7d8a93" /><rect x="113.0" y="185.0" width="27.0" height="9.5" fill="#8b96a0" /><rect x="80.5" y="175.0" width="10.0" height="21.0" fill="#a9ae9c" /><rect x="133.0" y="172.0" width="8.0" height="6.0" fill="#2a2c2c" /><rect x="71.0" y="197.6" width="90.0" height="12.5" fill="#6a7560" rx="3"/><rect x="73.0" y="200.0" width="86.0" height="4.0" fill="#7c8770" /><rect x="90.0" y="212.6" width="5.5" height="18.0" fill="#2b2e30" rx="1.8"/><rect x="97.3" y="212.6" width="5.5" height="18.0" fill="#1a1c1d" rx="1.8"/><rect x="104.6" y="212.6" width="5.5" height="18.0" fill="#1e2122" rx="1.8"/><rect x="111.9" y="212.6" width="5.5" height="18.0" fill="#2b2e30" rx="1.8"/><rect x="119.2" y="212.6" width="5.5" height="18.0" fill="#3d4042" rx="1.8"/><rect x="126.5" y="212.6" width="5.5" height="18.0" fill="#e4e4e0" rx="1.8"/><rect x="127.5" y="218.9" width="3.5" height="5.4" fill="#555a5c" rx="0.5"/><rect x="133.8" y="212.6" width="5.5" height="18.0" fill="#3d4042" rx="1.8"/><rect x="141.1" y="212.6" width="5.5" height="18.0" fill="#3d4042" rx="1.8"/><rect x="148.4" y="212.6" width="5.5" height="18.0" fill="#2b2e30" rx="1.8"/><rect x="155.7" y="212.6" width="5.5" height="18.0" fill="#3d4042" rx="1.8"/><rect x="163.0" y="212.6" width="5.5" height="18.0" fill="#34373a" rx="1.8"/><rect x="153.0" y="16.0" width="13.0" height="196.0" fill="#7d8683" /><rect x="153.0" y="16.0" width="13.0" height="60.0" fill="#8f9895" /><rect x="155.0" y="148.0" width="9.0" height="60.0" fill="#6f7872" /><rect x="151.0" y="0.0" width="267.0" height="16.5" fill="#1c1f1f" /><rect x="166.0" y="17.0" width="252.0" height="68.0" fill="#9fa392" /><rect x="166.0" y="75.0" width="252.0" height="9.0" fill="#8f9383" /><rect x="161.0" y="85.0" width="257.0" height="46.0" fill="#a2a696" /><rect x="169.5" y="85.0" width="6.5" height="46.0" fill="#bfc2b3" /><rect x="280.5" y="85.0" width="7.0" height="46.0" fill="#bfc2b3" /><rect x="391.0" y="85.0" width="6.0" height="46.0" fill="#bfc2b3" /><rect x="161.0" y="130.7" width="257.0" height="12.5" fill="#1f2221" /><rect x="166.0" y="143.0" width="252.0" height="69.0" fill="#a1a594" /><rect x="167.0" y="212.5" width="5.8" height="20.0" fill="#e4e4e0" rx="1.8"/><rect x="168.0" y="219.5" width="3.8" height="6.0" fill="#555a5c" rx="0.5"/><rect x="174.3" y="212.5" width="5.8" height="20.0" fill="#d9d9d5" rx="1.8"/><rect x="175.3" y="219.5" width="3.8" height="6.0" fill="#555a5c" rx="0.5"/><rect x="181.6" y="212.5" width="5.8" height="20.0" fill="#c9cac6" rx="1.8"/><rect x="182.6" y="219.5" width="3.8" height="6.0" fill="#555a5c" rx="0.5"/><rect x="188.9" y="212.5" width="5.8" height="20.0" fill="#d9d9d5" rx="1.8"/><rect x="189.9" y="219.5" width="3.8" height="6.0" fill="#555a5c" rx="0.5"/><rect x="196.2" y="212.5" width="5.8" height="20.0" fill="#3b4c86" rx="1.8"/><rect x="203.5" y="212.5" width="5.8" height="20.0" fill="#34373a" rx="1.8"/><rect x="210.8" y="212.5" width="5.8" height="20.0" fill="#c9cac6" rx="1.8"/><rect x="211.8" y="219.5" width="3.8" height="6.0" fill="#555a5c" rx="0.5"/><rect x="218.1" y="212.5" width="5.8" height="20.0" fill="#3b4c86" rx="1.8"/><rect x="225.4" y="212.5" width="5.8" height="20.0" fill="#d9d9d5" rx="1.8"/><rect x="226.4" y="219.5" width="3.8" height="6.0" fill="#555a5c" rx="0.5"/><rect x="232.7" y="212.5" width="5.8" height="20.0" fill="#1a1c1d" rx="1.8"/><rect x="240.0" y="212.5" width="5.8" height="20.0" fill="#c9cac6" rx="1.8"/><rect x="241.0" y="219.5" width="3.8" height="6.0" fill="#555a5c" rx="0.5"/><rect x="247.3" y="212.5" width="5.8" height="20.0" fill="#3d4042" rx="1.8"/><rect x="254.6" y="212.5" width="5.8" height="20.0" fill="#232628" rx="1.8"/><rect x="261.9" y="212.5" width="5.8" height="20.0" fill="#d9d9d5" rx="1.8"/><rect x="262.9" y="219.5" width="3.8" height="6.0" fill="#555a5c" rx="0.5"/><rect x="269.2" y="212.5" width="5.8" height="20.0" fill="#e4e4e0" rx="1.8"/><rect x="270.2" y="219.5" width="3.8" height="6.0" fill="#555a5c" rx="0.5"/><rect x="276.5" y="212.5" width="5.8" height="20.0" fill="#c9cac6" rx="1.8"/><rect x="277.5" y="219.5" width="3.8" height="6.0" fill="#555a5c" rx="0.5"/><rect x="283.8" y="212.5" width="5.8" height="20.0" fill="#232628" rx="1.8"/><rect x="291.1" y="212.5" width="5.8" height="20.0" fill="#d9d9d5" rx="1.8"/><rect x="292.1" y="219.5" width="3.8" height="6.0" fill="#555a5c" rx="0.5"/><rect x="298.4" y="212.5" width="5.8" height="20.0" fill="#e4e4e0" rx="1.8"/><rect x="299.4" y="219.5" width="3.8" height="6.0" fill="#555a5c" rx="0.5"/><rect x="305.7" y="212.5" width="5.8" height="20.0" fill="#e4e4e0" rx="1.8"/><rect x="306.7" y="219.5" width="3.8" height="6.0" fill="#555a5c" rx="0.5"/><rect x="313.0" y="212.5" width="5.8" height="20.0" fill="#d9d9d5" rx="1.8"/><rect x="314.0" y="219.5" width="3.8" height="6.0" fill="#555a5c" rx="0.5"/><rect x="320.3" y="212.5" width="5.8" height="20.0" fill="#1a1c1d" rx="1.8"/><rect x="327.6" y="212.5" width="5.8" height="20.0" fill="#3d4042" rx="1.8"/><rect x="334.9" y="212.5" width="5.8" height="20.0" fill="#1e2122" rx="1.8"/><rect x="342.2" y="212.5" width="5.8" height="20.0" fill="#3d4042" rx="1.8"/><rect x="349.5" y="212.5" width="5.8" height="20.0" fill="#34373a" rx="1.8"/><rect x="356.8" y="212.5" width="5.8" height="20.0" fill="#3b4c86" rx="1.8"/><rect x="364.1" y="212.5" width="5.8" height="20.0" fill="#3b4c86" rx="1.8"/><rect x="327.0" y="214.0" width="6.0" height="45.0" fill="#777a72" /><g stroke="#d9cc70" stroke-width="1.4" fill="none"><polyline points="166.70000000000005,85 166.70000000000005,16.700000000000003 418,16.700000000000003"/><line x1="161" y1="85" x2="418" y2="85"/><line x1="161.5" y1="85" x2="161.5" y2="130"/><polyline points="418,212 166.70000000000005,212 166.70000000000005,143"/></g><rect x="214.0" y="20.0" width="6.0" height="7.0" fill="#1f2120" /><rect x="283.0" y="20.0" width="7.0" height="8.0" fill="#1f2120" /><rect x="396.0" y="32.0" width="7.0" height="6.0" fill="#1f2120" /><rect x="323.0" y="47.0" width="6.0" height="6.0" fill="#1f2120" /><rect x="218.0" y="53.0" width="7.0" height="8.0" fill="#1f2120" /><rect x="193.0" y="57.0" width="5.0" height="5.0" fill="#1f2120" /><rect x="234.0" y="61.0" width="5.0" height="6.0" fill="#1f2120" /><rect x="264.0" y="62.0" width="6.0" height="7.0" fill="#1f2120" /><rect x="333.0" y="66.0" width="4.0" height="4.0" fill="#1f2120" /><rect x="364.0" y="33.0" width="5.0" height="5.0" fill="#1f2120" /><rect x="322.0" y="52.0" width="3.0" height="3.0" fill="#1f2120" /><rect x="211.0" y="151.0" width="6.0" height="6.0" fill="#1f2120" /><rect x="244.0" y="154.0" width="6.0" height="5.0" fill="#1f2120" /><rect x="257.0" y="150.0" width="4.0" height="6.0" fill="#1f2120" /><rect x="318.0" y="149.0" width="6.0" height="5.0" fill="#1f2120" /><rect x="390.0" y="149.0" width="6.0" height="6.0" fill="#1f2120" /><rect x="193.0" y="178.0" width="5.0" height="5.0" fill="#1f2120" /><rect x="204.0" y="176.0" width="5.0" height="4.0" fill="#1f2120" /><rect x="226.0" y="177.0" width="5.0" height="4.0" fill="#1f2120" /><rect x="245.0" y="176.0" width="5.0" height="4.0" fill="#1f2120" /><rect x="271.0" y="168.0" width="5.0" height="10.0" fill="#1f2120" /><rect x="319.0" y="178.0" width="4.0" height="4.0" fill="#1f2120" /><rect x="230.0" y="43.0" width="3.0" height="3.0" fill="#e8e8e4" /><rect x="256.0" y="43.0" width="3.0" height="3.0" fill="#e8e8e4" /><rect x="309.0" y="42.0" width="3.0" height="3.0" fill="#e8e8e4" /><rect x="402.0" y="41.0" width="3.0" height="3.0" fill="#e8e8e4" /><rect x="227.0" y="163.0" width="3.0" height="3.0" fill="#e8e8e4" /><rect x="293.0" y="171.0" width="3.0" height="3.0" fill="#e8e8e4" /><rect x="324.0" y="184.0" width="3.0" height="3.0" fill="#e8e8e4" /><path d="M208 129.5 C206.20000000000005 122 199 116 199 109.5 A9 9 0 1 1 217 109.5 C217 116 209.79999999999995 122 208 129.5Z" fill="#ec4a3c"/><circle cx="208" cy="109.5" r="2.6" fill="#6d0f0c"/><rect x="92.0" y="251.0" width="326.0" height="10.5" fill="rgba(235,235,235,0.8)" /><text x="94" y="259.3" font-family="Liberation Sans" font-size="8.9" fill="#454545" textLength="319" lengthAdjust="spacingAndGlyphs">Imagery ©2018 , DigitalGlobe, U.S. Geological Survey | 使用条款 | 报告地图错误</text><text x="4" y="257.5" font-family="Liberation Sans" font-size="14.2" font-weight="bold" fill="#f2f2f2" stroke="#1a1a1a" stroke-width="1.6" paint-order="stroke" textLength="47" lengthAdjust="spacingAndGlyphs">Google</text><rect x="7.0" y="213.5" width="21.5" height="21.2" fill="#f8f8f8" rx="1"/><rect x="13.8" y="219.8" width="3.0" height="3.0" fill="#2d2d2d" rx="0.7"/><rect x="17.6" y="219.8" width="3.0" height="3.0" fill="#2d2d2d" rx="0.7"/><rect x="13.8" y="223.6" width="3.0" height="3.0" fill="#2d2d2d" rx="0.7"/><rect x="17.6" y="223.6" width="3.0" height="3.0" fill="#2d2d2d" rx="0.7"/></svg>
<div class="a" style="left:1016px;top:214px;width:36px;height:36px;background:#efefef;border-radius:2px"></div>
<svg class="a" style="left:1018px;top:216px" width="34" height="33" viewBox="0 0 34 33">
<path d="M4 6 L19 6 L19 27 L4 27 Z" fill="#34a853"/>
<path d="M4 27 L4 23 L19 9 L24 15 L24 27 Z" fill="#c9e35a"/>
<path d="M6.5 27 L15 12.5 L25 27 Z" fill="#4a7fd6"/>
<path d="M4 23 L16 12 L17 13.5 L5.5 25 Z" fill="#f2e24a"/>
<circle cx="9.5" cy="12" r="3" fill="none" stroke="#e8f5e8" stroke-width="1.4"/>
<path d="M23 23.5 C22.2 19 18 15.5 18 10.5 A5.8 5.8 0 1 1 29.6 10.5 C29.6 15.5 24.2 19 23 23.5Z" fill="#e8493a"/>
<circle cx="23.8" cy="10.8" r="2" fill="#a51c12"/>
</svg>
<div class="a" style="left:1016px;top:252.5px;width:36px;height:35px;background:#fafafa;border-radius:2px"></div>
<div class="a" style="left:1021.5px;top:256px;width:27px;height:28px;background:#ececef;border-radius:3px"></div>
<svg class="a" style="left:1018px;top:254px" width="33" height="32" viewBox="0 0 33 32">
<ellipse cx="17" cy="15.5" rx="11" ry="3.8" fill="none" stroke="#3e2438" stroke-width="1.9"/>
<line x1="23.5" y1="8.5" x2="10" y2="23" stroke="#3e2438" stroke-width="1.9"/>
</svg>

</body></html>
